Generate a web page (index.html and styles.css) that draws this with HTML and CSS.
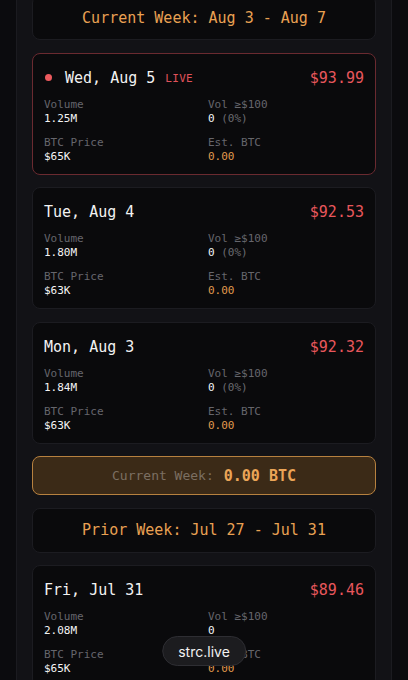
FILE: index.html
```html
<!DOCTYPE html>
<html>
<head>
<meta charset="utf-8">
<link rel="stylesheet" href="styles.css">
</head>
<body>
<div class="panel">
  <div class="week-head week-head-top">Current Week: Aug 3 - Aug 7</div>

  <div class="day live">
    <div class="day-top">
      <div class="day-title"><span class="dot"></span>Wed, Aug 5<span class="live-tag">LIVE</span></div>
      <div class="price">$93.99</div>
    </div>
    <div class="stats">
      <div class="stat"><div class="lbl">Volume</div><div class="val">1.25M</div></div>
      <div class="stat"><div class="lbl">Vol ≥$100</div><div class="val">0 <span class="muted">(0%)</span></div></div>
      <div class="stat"><div class="lbl">BTC Price</div><div class="val">$65K</div></div>
      <div class="stat"><div class="lbl">Est. BTC</div><div class="val orange">0.00</div></div>
    </div>
  </div>

  <div class="day">
    <div class="day-top">
      <div class="day-title">Tue, Aug 4</div>
      <div class="price">$92.53</div>
    </div>
    <div class="stats">
      <div class="stat"><div class="lbl">Volume</div><div class="val">1.80M</div></div>
      <div class="stat"><div class="lbl">Vol ≥$100</div><div class="val">0 <span class="muted">(0%)</span></div></div>
      <div class="stat"><div class="lbl">BTC Price</div><div class="val">$63K</div></div>
      <div class="stat"><div class="lbl">Est. BTC</div><div class="val orange">0.00</div></div>
    </div>
  </div>

  <div class="day">
    <div class="day-top">
      <div class="day-title">Mon, Aug 3</div>
      <div class="price">$92.32</div>
    </div>
    <div class="stats">
      <div class="stat"><div class="lbl">Volume</div><div class="val">1.84M</div></div>
      <div class="stat"><div class="lbl">Vol ≥$100</div><div class="val">0 <span class="muted">(0%)</span></div></div>
      <div class="stat"><div class="lbl">BTC Price</div><div class="val">$63K</div></div>
      <div class="stat"><div class="lbl">Est. BTC</div><div class="val orange">0.00</div></div>
    </div>
  </div>

  <div class="summary"><span class="sum-lbl">Current Week:</span><span class="sum-val">0.00 BTC</span></div>

  <div class="week-head">Prior Week: Jul 27 - Jul 31</div>

  <div class="day">
    <div class="day-top">
      <div class="day-title">Fri, Jul 31</div>
      <div class="price">$89.46</div>
    </div>
    <div class="stats">
      <div class="stat"><div class="lbl">Volume</div><div class="val">2.08M</div></div>
      <div class="stat"><div class="lbl">Vol ≥$100</div><div class="val">0</div></div>
      <div class="stat"><div class="lbl">BTC Price</div><div class="val">$65K</div></div>
      <div class="stat"><div class="lbl">Est. BTC</div><div class="val orange">0.00</div></div>
    </div>
  </div>
</div>

<div class="pill">strc.live</div>
</body>
</html>
```

FILE: styles.css
```css
html, body {
  margin: 0;
  padding: 0;
  background: #0b0b0e;
  height: 100%;
  overflow: hidden;
}
body {
  font-family: "DejaVu Sans Mono", "Liberation Mono", monospace;
  color: #ececec;
}
.panel {
  margin: 0 16px;
  padding: 0 15px 40px;
  background: #121216;
  border-left: 1px solid #1b1b20;
  border-right: 1px solid #1b1b20;
  display: flex;
  flex-direction: column;
  gap: 12.5px;
  min-height: 100%;
  box-sizing: border-box;
}
.week-head {
  height: 45px;
  box-sizing: border-box;
  background: #0a0a0c;
  border: 1px solid #1c1c21;
  border-radius: 8px;
  display: flex;
  align-items: center;
  justify-content: center;
  color: #e9a153;
  font-size: 15px;
  font-weight: 500;
}
.week-head-top {
  margin-top: -5px;
}
.day {
  height: 122px;
  box-sizing: border-box;
  background: #0a0a0c;
  border: 1px solid #1c1c21;
  border-radius: 8px;
  padding: 12px 11px 0;
}
.day.live {
  border-color: #6a2a30;
}
.day-top {
  display: flex;
  justify-content: space-between;
  align-items: center;
  height: 24px;
}
.day-title {
  display: flex;
  align-items: center;
  font-size: 15px;
  color: #f2f2f2;
}
.dot {
  width: 7px;
  height: 7px;
  border-radius: 50%;
  background: #ec5a5e;
  margin: 0 13px 0 1px;
}
.live-tag {
  font-size: 11px;
  color: #e0525a;
  margin-left: 10px;
  margin-top: 2px;
  letter-spacing: 0.3px;
}
.price {
  font-size: 15px;
  color: #e8575c;
}
.stats {
  display: grid;
  grid-template-columns: 164px 1fr;
  row-gap: 10px;
  margin-top: 8px;
}
.lbl {
  font-size: 11px;
  line-height: 14px;
  color: #66666c;
}
.val {
  font-size: 11px;
  line-height: 14px;
  color: #f4f4f4;
}
.val.orange {
  color: #e09a4e;
}
.muted {
  color: #6a6a70;
}
.summary {
  height: 39px;
  box-sizing: border-box;
  background: #3b2a17;
  border: 1px solid #b7813f;
  border-radius: 8px;
  display: flex;
  align-items: center;
  justify-content: center;
}
.sum-lbl {
  font-size: 13px;
  color: #7b6f62;
  margin-right: 10px;
}
.sum-val {
  font-size: 15px;
  font-weight: bold;
  color: #eba557;
}
.pill {
  position: fixed;
  left: 50%;
  bottom: 14px;
  transform: translateX(-50%);
  height: 30px;
  box-sizing: border-box;
  padding: 0 15px;
  display: flex;
  align-items: center;
  background: #1c1c1f;
  border: 1px solid #2e2e33;
  border-radius: 15px;
  font-family: Inter, "Liberation Sans", sans-serif;
  font-size: 14px;
  color: #f2f2f2;
}
```
